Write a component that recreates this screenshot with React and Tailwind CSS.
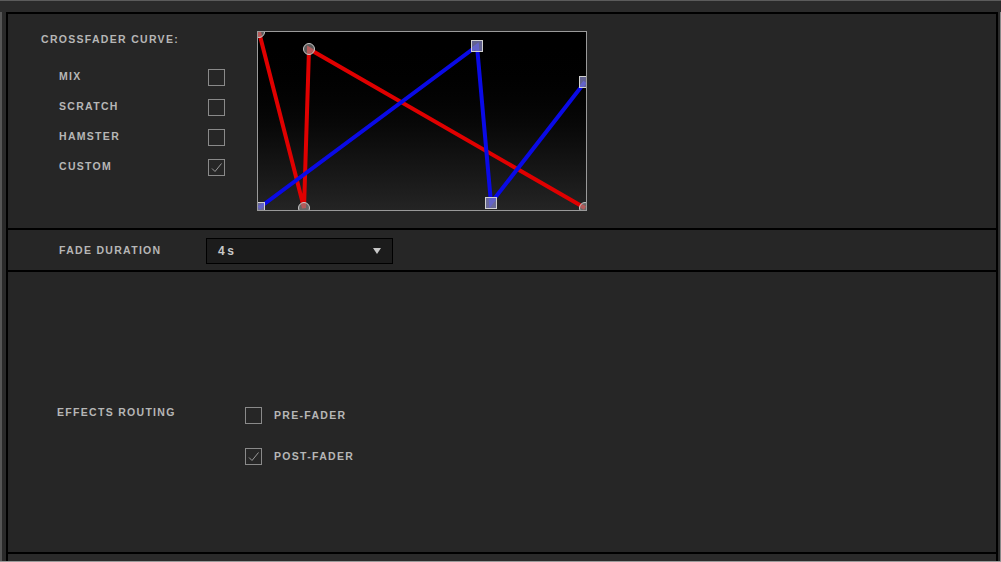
function Box({ checked = false }) {
  return (
    <div className="flex h-[17px] w-[17px] shrink-0 items-center justify-center border border-[#8a8a8a]">
      {checked && (
        <svg width="13" height="13" viewBox="0 0 13 13">
          <path d="M2 7.5 L5 10.5 L11.5 2.5" fill="none" stroke="#9a9a9a" strokeWidth="1" />
        </svg>
      )}
    </div>
  );
}

const label = "text-[10.5px] font-bold tracking-[1.3px] text-[#b6b6b6]";

function CurveGraph() {
  const red = [[2, 1], [47, 177], [52, 18], [328, 177]];
  const blue = [[2, 177], [220, 15], [234, 172], [328, 51]];
  const pts = (a) => a.map((p) => p.join(",")).join(" ");
  return (
    <div className="h-[180px] w-[330px] border border-[#9a9a9a] bg-gradient-to-b from-[#000000] to-[#242424]">
      <svg width="328" height="178" viewBox="1 1 328 178" className="block overflow-hidden">
        <polyline points={pts(red)} fill="none" stroke="#e00000" strokeWidth="4" />
        <polyline points={pts(blue)} fill="none" stroke="#0a0ae6" strokeWidth="4" />
        {red.map(([x, y], i) => (
          <circle key={i} cx={x} cy={y} r="5.5" fill="rgba(150,150,150,0.6)" stroke="#c8c8c8" strokeWidth="1" />
        ))}
        {blue.map(([x, y], i) => (
          <rect key={i} x={x - 5.5} y={y - 5.5} width="11" height="11" fill="rgba(130,130,190,0.75)" stroke="#d0d0d0" strokeWidth="1" />
        ))}
      </svg>
    </div>
  );
}

export default function App() {
  return (
    <div
      className="flex h-[562px] w-[1001px] flex-col overflow-hidden bg-[#2a2a2a]"
      style={{ fontFamily: '"Liberation Sans", Arial, sans-serif' }}
    >
      <div className="h-px bg-[#5c5c5c]" />
      <div className="h-[11px] bg-[#2b2b2b]" />
      <div className="flex flex-1 border-l-2 border-l-[#555] bg-[#1e1e1e]">
        <div className="w-[4px] bg-[#2a2a2a]" />
        <div className="flex flex-1 flex-col border-x-2 border-t-2 border-black bg-[#262626]">
          {/* crossfader curve */}
          <div className="flex h-[216px] border-b-2 border-black pl-[33px] pt-[18px]">
            <div className="w-[216px]">
              <div className={label}>CROSSFADER CURVE:</div>
              <div className="mt-[21px] flex flex-col gap-[13px] pl-[18px]">
                {["MIX", "SCRATCH", "HAMSTER", "CUSTOM"].map((t) => (
                  <div key={t} className="flex h-[17px] items-center">
                    <span className={`${label} w-[149px]`}>{t}</span>
                    <Box checked={t === "CUSTOM"} />
                  </div>
                ))}
              </div>
            </div>
            <div className="-mt-[1px]">
              <CurveGraph />
            </div>
          </div>
          {/* fade duration */}
          <div className="flex h-[42px] items-center border-b-2 border-black pl-[51px]">
            <span className={`${label} w-[147px] pt-[1px]`}>FADE DURATION</span>
            <div className="mt-[2px] flex h-[26px] w-[187px] items-center justify-between border border-black bg-[#1c1c1c] px-[11px]">
              <span className="text-[12px] font-bold tracking-[2.5px] text-[#c8c8c8]">4s</span>
              <svg width="8" height="6" viewBox="0 0 8 6">
                <path d="M0 0 L8 0 L4 6 Z" fill="#c8c8c8" />
              </svg>
            </div>
          </div>
          {/* effects routing */}
          <div className="flex flex-1 border-b-2 border-black pl-[49px] pt-[132px]">
            <span className={`${label} w-[188px] pt-[1px]`}>EFFECTS ROUTING</span>
            <div className="flex flex-col gap-[24px] pt-[3px]">
              <div className="flex items-center gap-[12px]">
                <Box />
                <span className={label}>PRE-FADER</span>
              </div>
              <div className="flex items-center gap-[12px]">
                <Box checked />
                <span className={label}>POST-FADER</span>
              </div>
            </div>
          </div>
          <div className="h-[7px] bg-[#2a2a2a]" />
        </div>
        <div className="w-[2px] bg-[#2a2a2a]" />
        <div className="w-px bg-[#888]" />
      </div>
      <div className="h-px bg-[#9a9a9a]" />
    </div>
  );
}
